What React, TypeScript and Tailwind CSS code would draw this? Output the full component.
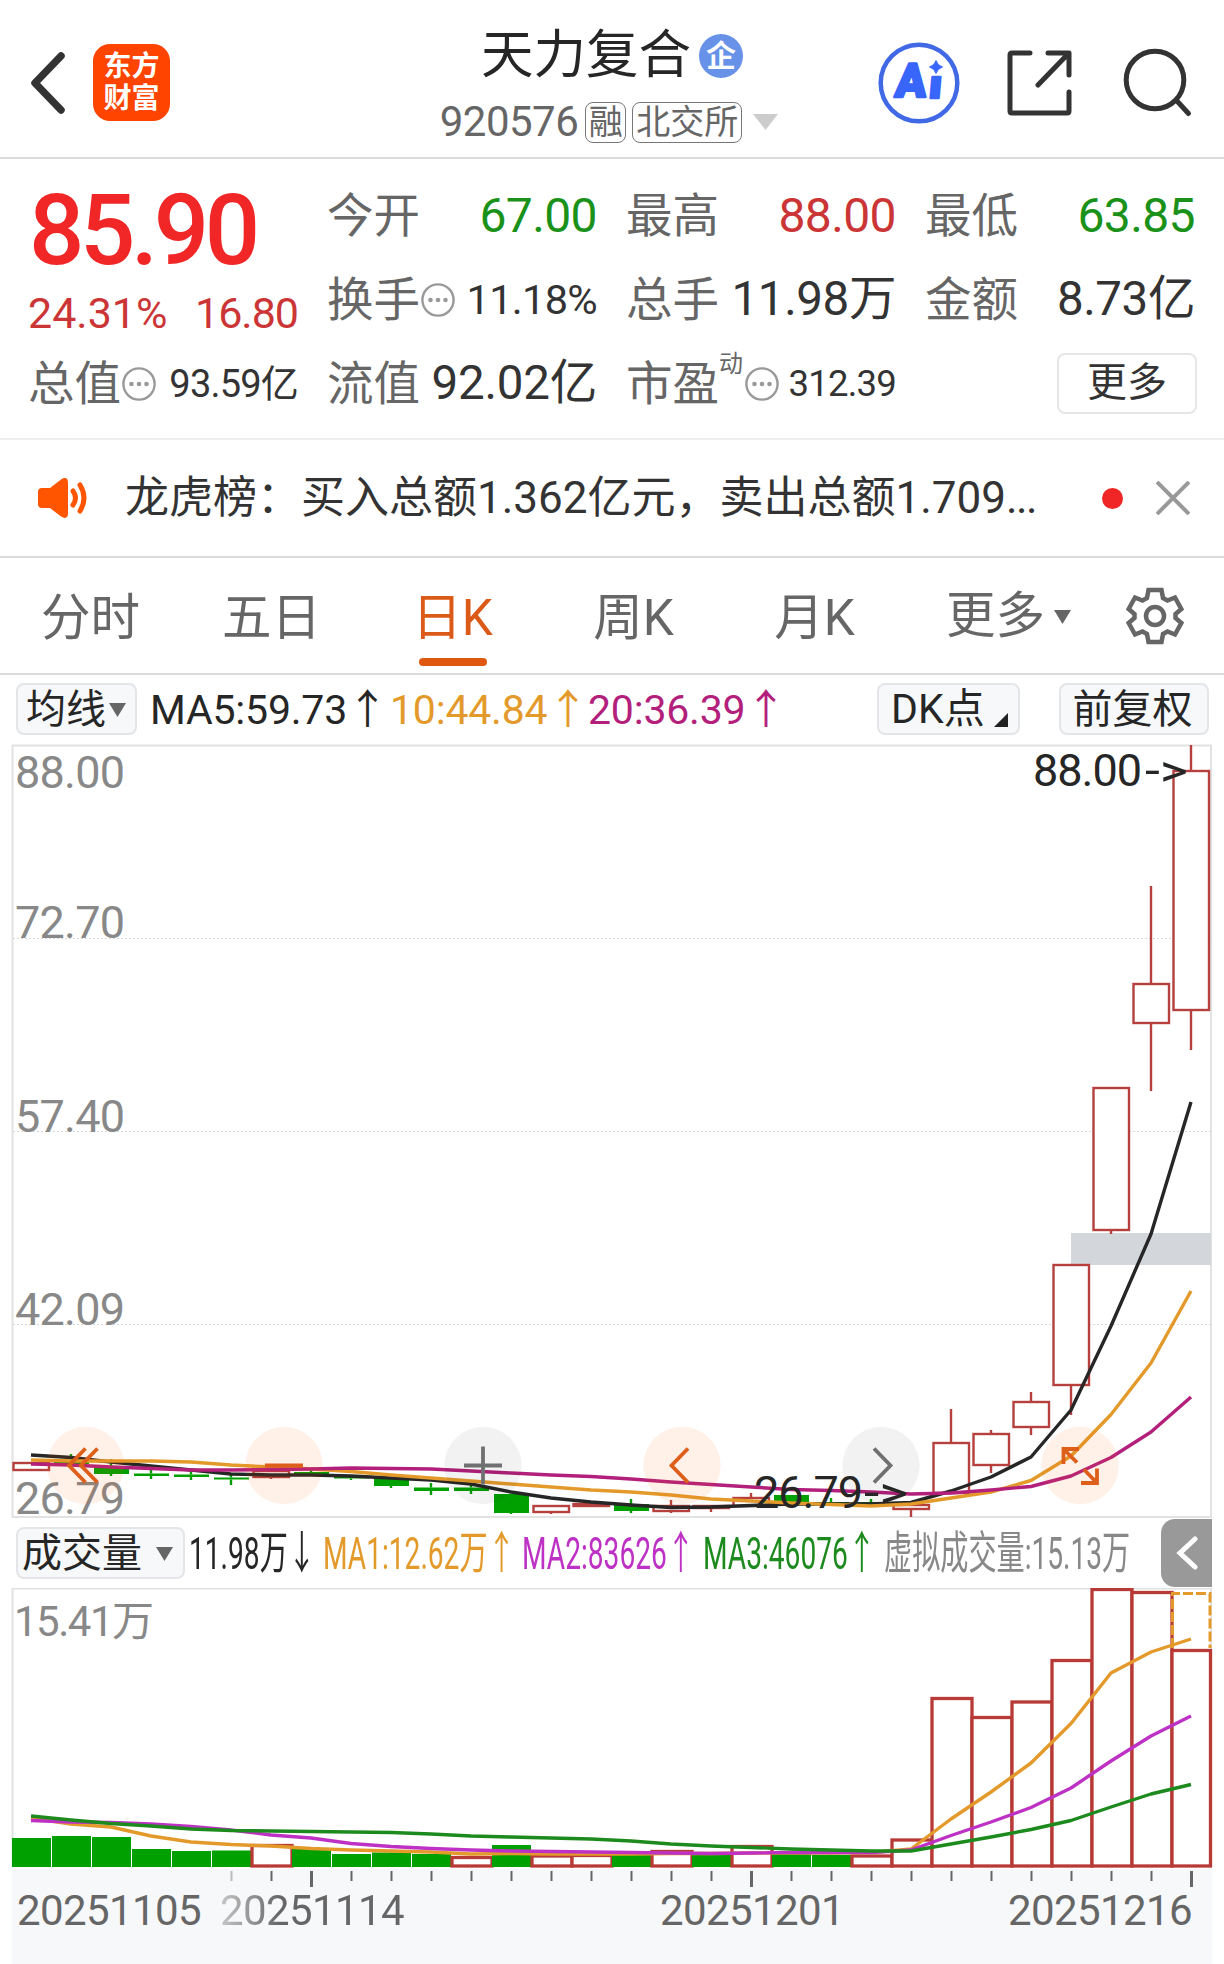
import type { ReactNode } from 'react'

// Preços e volumes em coordenadas do gráfico (um candle a cada 40px)
interface Candle {
  up: boolean
  high: number
  top: number
  bottom: number
  low: number
}

const PASSO = 40
const RED = '#b5403d'
const GREEN = '#00a000'

const x = (i: number) => 31 + i * PASSO

const k = (up: boolean, high: number, top: number, bottom: number, low: number): Candle => ({ up, high, top, bottom, low })

const CANDLES: Candle[] = [
  k(true, 1462, 1462, 1471, 1471),
  k(false, 1454, 1462, 1464, 1466),
  k(false, 1459, 1467.5, 1474, 1476),
  k(false, 1469, 1473.5, 1476, 1479),
  k(false, 1471.5, 1474.5, 1477, 1480),
  k(false, 1475, 1477.5, 1479.5, 1485),
  k(true, 1470, 1470, 1478, 1479),
  k(false, 1470, 1472, 1474.5, 1474.5),
  k(false, 1476, 1476.5, 1478.5, 1480),
  k(false, 1479, 1479, 1486, 1488),
  k(false, 1483, 1487.5, 1491, 1495),
  k(false, 1485, 1487.5, 1491, 1494),
  k(false, 1494, 1494, 1513, 1514),
  k(true, 1505, 1505, 1513, 1514),
  k(true, 1503, 1503, 1507, 1507),
  k(false, 1499, 1504, 1511, 1513),
  k(true, 1500, 1505, 1512, 1513),
  k(true, 1505, 1505, 1509, 1512),
  k(true, 1493, 1497, 1507, 1507),
  k(false, 1495, 1495, 1503, 1503),
  k(false, 1498, 1502, 1504, 1506),
  k(false, 1499, 1502, 1504, 1504),
  k(true, 1504, 1504, 1510, 1517),
  k(true, 1409, 1442, 1494, 1494),
  k(true, 1430, 1433, 1466, 1473),
  k(true, 1392, 1401, 1428, 1435),
  k(true, 1264, 1264, 1386, 1415),
  k(true, 1087, 1087, 1231, 1234),
  k(true, 886, 983, 1024, 1091),
  k(true, 745, 770, 1011, 1050),
]

const MA5 = [1455, 1457.5, 1462, 1466, 1470, 1474, 1475, 1475, 1476, 1478, 1480, 1484, 1492, 1498, 1502, 1505, 1507.5, 1507, 1505.5, 1504, 1504, 1504, 1502.5, 1491, 1477, 1457, 1410, 1326, 1234, 1102]
const MA10 = [1460, 1461, 1461, 1461, 1462, 1465, 1467, 1469, 1471.5, 1475, 1478, 1481, 1484, 1487, 1490, 1492, 1495, 1499, 1501, 1503, 1504.5, 1506, 1504, 1498, 1492, 1480.5, 1456, 1414.5, 1363, 1291]
const MA20 = [1464, 1465, 1467, 1468.5, 1470, 1470, 1469.5, 1469, 1468, 1468.5, 1469, 1471, 1473, 1475, 1476.5, 1479, 1482, 1484.5, 1487, 1489.5, 1490.5, 1492, 1494, 1493, 1490, 1486.5, 1476, 1457.5, 1432, 1397]

// Topo de cada barra de volume; a base fica em 1867
const VOLUMES: [boolean, number][] = [
  [false, 1838], [false, 1836], [false, 1837], [false, 1849], [false, 1851], [false, 1850.5],
  [true, 1844], [false, 1849], [false, 1854], [false, 1852.5], [false, 1854], [true, 1856],
  [false, 1845], [true, 1854.5], [true, 1854], [false, 1854.5], [true, 1850], [false, 1854],
  [true, 1845], [false, 1854], [false, 1855], [true, 1854.5], [true, 1838.5], [true, 1697],
  [true, 1716], [true, 1700.5], [true, 1659], [true, 1588], [true, 1591], [true, 1649],
]

const VMA1 = [1818, 1824, 1827, 1836, 1842, 1844.5, 1846, 1848.5, 1850, 1851, 1852, 1854, 1853.5, 1854, 1854, 1854, 1853.5, 1853.5, 1853, 1853, 1853, 1852.5, 1849, 1819, 1792, 1763, 1723.5, 1673, 1652, 1639]
const VMA2 = [1820.5, 1822, 1822.5, 1824, 1826.5, 1830, 1835, 1838, 1843.5, 1846.5, 1848.5, 1850, 1851, 1851.5, 1852, 1852.5, 1853, 1853.5, 1853, 1852.5, 1852.5, 1852.5, 1850, 1835.5, 1822, 1807.5, 1788, 1761, 1736, 1716]
const VMA3 = [1816, 1820, 1823.5, 1826, 1829, 1830.5, 1831, 1831.5, 1832, 1832.5, 1834, 1836, 1837, 1838, 1839, 1841, 1844, 1846, 1847.5, 1849, 1850, 1851, 1851, 1844, 1837, 1829.5, 1820.5, 1807, 1794, 1784.5]

const pontos = (ys: number[]) => ys.map((y, i) => `${x(i)},${y}`).join(' ')

const FONT = "font-[Roboto,'Noto_Sans_CJK_SC',sans-serif]"

function Linha({ ys, cor }: { ys: number[]; cor: string }) {
  return <polyline points={pontos(ys)} fill="none" stroke={cor} strokeWidth="3.4" strokeLinejoin="round" />
}

function Info() {
  return (
    <svg className="w-[34px] h-[34px] ml-px shrink-0" viewBox="0 0 34 34" fill="none" stroke="#999" strokeWidth="2.4">
      <circle cx="17" cy="17" r="15.6" />
      <g fill="#999" stroke="none">
        <circle cx="9.5" cy="17" r="2.3" />
        <circle cx="17" cy="17" r="2.3" />
        <circle cx="24.5" cy="17" r="2.3" />
      </g>
    </svg>
  )
}

function Item({ label, extra, children }: { label: string; extra?: ReactNode; children: ReactNode }) {
  return (
    <div className="flex items-center justify-between h-[84px] whitespace-nowrap">
      <span className="flex items-center -ml-px text-[46.5px] text-[#666]">{label}{extra}</span>
      {children}
    </div>
  )
}

function Seta({ className }: { className?: string }) {
  return (
    <svg className={className} width="17" height="14" viewBox="0 0 17 14" fill="#666"><path d="M0 0h17L8.5 14z" /></svg>
  )
}

function Header() {
  return (
    <header className="flex items-start h-[159px] border-b-2 border-[#dcdcdc]">
      <svg className="w-[40px] h-[64px] mt-[51px] ml-[28px]" viewBox="0 0 40 64" fill="none" stroke="#333" strokeWidth="7.5" strokeLinecap="round" strokeLinejoin="round">
        <path d="M33 5L7 32l26 27" />
      </svg>
      <div className="flex flex-col items-center justify-center w-[77px] h-[77px] mt-[44px] ml-[25px] rounded-[17px] bg-[#ff4400] text-white font-bold text-[28px] leading-[32px]">
        <span>东方</span>
        <span>财富</span>
      </div>
      <div className="flex flex-col items-center w-[350px] ml-[264px] mt-[25px] whitespace-nowrap">
        <div className="flex items-center h-[60px] ml-[6px]">
          <span className="text-[52.5px] text-[#262626]">天力复合</span>
          <span className="flex items-center justify-center w-[44px] h-[44px] ml-[8px] mt-[2px] rounded-full bg-[#6792e8] text-white font-bold text-[30px]">企</span>
        </div>
        <div className="flex items-center h-[44px] mt-[15px] text-[#666]">
          <span className="text-[42px] tracking-[-0.5px]">920576</span>
          <span className="flex items-center justify-center w-[41px] h-[41px] ml-[7px] rounded-lg border-[1.5px] border-[#777] text-[34px]">融</span>
          <span className="flex items-center justify-center w-[110px] h-[41px] ml-[6px] rounded-lg border-[1.5px] border-[#777] text-[34px]">北交所</span>
          <svg className="ml-[11px]" width="25" height="16" viewBox="0 0 25 16" fill="#ccc"><path d="M0 0h25L12.500 16z" /></svg>
        </div>
      </div>
      <svg className="w-[82px] h-[82px] mt-[42px] ml-[94px]" viewBox="0 0 82 82">
        <circle cx="41" cy="41" r="38.3" fill="none" stroke="#4169e6" strokeWidth="4.5" />
        <g fill="#3866fb" stroke="#3866fb" strokeWidth="2.500" strokeLinejoin="round" fontFamily="Roboto" fontWeight="900" transform="translate(5 0) skewX(-5)">
          <text x="16" y="55" fontSize="47" textLength="31" lengthAdjust="spacingAndGlyphs">A</text>
          <text x="50" y="56.500" fontSize="40" textLength="13" lengthAdjust="spacingAndGlyphs">ı</text>
        </g>
        <path d="M58 18.500q1.500 5 6.500 6.500q-5 1.500-6.500 6.500q-1.500-5-6.500-6.500q5-1.500 6.500-6.500z" fill="#3866fb" stroke="#3866fb" />
      </svg>
      <svg className="w-[68px] h-[68px] mt-[49px] ml-[46px]" viewBox="0 0 68 68" fill="none" stroke="#333" strokeWidth="5" strokeLinecap="round" strokeLinejoin="round">
        <path d="M24 4H6Q4 4 4 6v56q0 2 2 2h55q2 0 2-2V43M42 4h21v22M62 5L32 36" />
      </svg>
      <svg className="w-[72px] h-[72px] mt-[46px] ml-[49px]" viewBox="0 0 72 72" fill="none" stroke="#333" strokeWidth="5" strokeLinecap="round">
        <circle cx="32" cy="34" r="28.800" />
        <path d="M54 55l11.500 12.500" />
      </svg>
    </header>
  )
}

function Cotacao() {
  return (
    <section className="grid grid-cols-[269px_269px_269px_269px] gap-x-[30px] h-[281px] px-[29px] pt-[15px] border-b-2 border-[#eee]">
      <div>
        <div className="h-[116px] flex items-center text-[97.5px] font-medium text-[#f12626] tracking-[-4.4px]">85.90</div>
        <div className="flex items-center justify-between h-[46px] mb-[6px] -ml-px text-[43px] text-[#cb3535]">
          <span>24.31%</span>
          <span className="tracking-[-1px]">16.80</span>
        </div>
        <Item label="总值" extra={<Info />}>
          <span className="text-[38px] text-[#333] tracking-[-0.8px]">93.59亿</span>
        </Item>
      </div>
      <div>
        <Item label="今开"><span className="text-[48px] tracking-[-0.6px] text-[#1a921a]">67.00</span></Item>
        <Item label="换手" extra={<Info />}><span className="text-[41.500px] tracking-[-0.7px] text-[#333]">11.18%</span></Item>
        <Item label="流值"><span className="text-[47.500px] tracking-[-0.2px] text-[#333]">92.02亿</span></Item>
      </div>
      <div>
        <Item label="最高"><span className="text-[48px] tracking-[-0.6px] text-[#cb3535]">88.00</span></Item>
        <Item label="总手"><span className="text-[47.500px] tracking-[-0.4px] text-[#333]">11.98万</span></Item>
        <Item label="市盈" extra={<><span className="text-[24px] -mt-[40px] mr-px">动</span><Info /></>}>
          <span className="text-[36.500px] text-[#333] tracking-[-0.8px]">312.39</span>
        </Item>
      </div>
      <div>
        <Item label="最低"><span className="text-[48px] tracking-[-0.6px] text-[#1a921a]">63.85</span></Item>
        <Item label="金额"><span className="text-[47.500px] tracking-[-0.4px] text-[#333]">8.73亿</span></Item>
        <div className="flex items-center justify-end h-[84px] -mt-px -mr-[2px]">
          <button className="w-[140px] h-[61px] rounded-lg border-2 border-[#e6e6e6] text-[40px] text-[#333]">更多</button>
        </div>
      </div>
    </section>
  )
}

function Aviso() {
  return (
    <section className="flex items-center h-[118px] pl-[37px] border-b-2 border-[#dadada] whitespace-nowrap">
      <svg className="w-[52px] h-[42px]" viewBox="0 0 52 42" fill="#ff5500">
        <path d="M5 11h8L24 2.500q7-4 7 3.500v30q0 7.500-7 3.500L13 31H5q-4 0-4-4V15q0-4 4-4z" />
        <path d="M36 14q5 7 0 14M43 8q8 13 0 26" fill="none" stroke="#ff5500" strokeWidth="5" strokeLinecap="round" />
      </svg>
      <p className="w-[977px] ml-[36px] text-[44px] text-[#333]">
        龙虎榜：买入总额1.362亿元，卖出总额1.709<span className="tracking-[-1.600px]">...</span>
      </p>
      <span className="w-[21px] h-[21px] rounded-full bg-[#f02525]" />
      <svg className="ml-[33px]" width="34" height="34" viewBox="0 0 34 34" stroke="#999" strokeWidth="4"><path d="M1 1l32 32M33 1L1 33" /></svg>
    </section>
  )
}

const ABAS = ['分时', '五日', '日K', '周K', '月K']

function Abas() {
  return (
    <nav className="flex h-[117px] border-b-2 border-[#dcdcdc] text-[49.500px] text-[#666]">
      {ABAS.map((aba) => (
        <div key={aba} className={`flex flex-col items-center w-[181px] pt-[36px] ${aba === '日K' ? 'text-[#dc5a18]' : ''}`}>
          <span>{aba}</span>
          {aba === '日K' && <span className="w-[68px] h-[8px] mt-[14px] rounded-full bg-[#e0580f]" />}
        </div>
      ))}
      <div className="flex items-center w-[181px] pl-[41px] pt-[2px]">
        更多<Seta className="ml-[9px]" />
      </div>
      <svg className="w-[58px] h-[58px] mt-[29px] ml-[40px]" viewBox="-29 -29 58 58" fill="none" stroke="#666" strokeWidth="4.500">
        <path d="M-6.500-26h13l1.500 8 4.500 2.500L20-18.500l6.300 11.500L20.500-2v4l5.800 5L20 18.500l-7.500-3L8 18l-1.500 8h-13L-8 18l-4.500-2.500-7.500 3L-26.300 7l5.800-5v-4l-5.800-5L-20-18.500l7.500 3L-8-18z" />
        <circle r="9" />
      </svg>
    </nav>
  )
}

function Pilula({ className, children }: { className: string; children: ReactNode }) {
  return (
    <span className={`flex items-center h-[52px] rounded-lg border-2 border-[#e3e5e8] bg-[#f6f8fa] text-[40px] text-[#262626] ${className}`}>
      {children}
    </span>
  )
}

function Medias() {
  return (
    <div className="flex items-center h-[70px] pl-[16px] pr-[15px] whitespace-nowrap text-[41px]">
      <Pilula className="w-[121px] pl-[8px] pt-px">均线<Seta className="ml-[3px]" /></Pilula>
      <span className="ml-[13px] pt-[2px] w-[240px] text-[#262626] tracking-[-0.2px]">MA5:59.73↑</span>
      <span className="pt-[2px] w-[198px] text-[#e39a2b] tracking-[-0.2px]">10:44.84↑</span>
      <span className="pt-[2px] w-[289px] text-[#b3207c] tracking-[-0.2px]">20:36.39↑</span>
      <Pilula className="w-[143px] pl-[12px] pt-px">
        <span className="text-[41px]">DK点</span>
        <svg className="ml-[9px] mt-[21px]" width="14" height="14" viewBox="0 0 14 14"><path d="M14 0v14H0z" fill="#222" /></svg>
      </Pilula>
      <Pilula className="ml-auto w-[150px] pt-px pr-[3px] justify-center">前复权</Pilula>
    </div>
  )
}

const BOTOES = [
  { cx: 85.5, laranja: true, d: 'M0-17l-16.500 17L0 17M12-17L-4.500 0L12 17' },
  { cx: 284, laranja: true, d: 'M-19 0h38' },
  { cx: 483, laranja: false, d: 'M-19 0h38M0-19v38' },
  { cx: 682, laranja: true, d: 'M6-17L-10.500 0L6 17' },
  { cx: 881, laranja: false, d: 'M-7-17L9.500 0L-7 17' },
  { cx: 1080, laranja: true, d: 'M-1-16.500h-15.500v15M-16-16L-3-3M17 3v14.500h-16M16.500 17L4 4' },
]

function GraficoPreco() {
  return (
    <svg className="block overflow-visible" width="1224" height="774" viewBox="0 744 1224 774" fontFamily="Roboto">
      <path d="M12.500 1517V745.500H1211V1517z" fill="none" stroke="#e2e2e2" strokeWidth="2" />
      <path d="M13 938.500H1211M13 1131.500H1211M13 1324.500H1211" stroke="#d8d8d8" strokeDasharray="2 2" />
      <path d="M1071 1233h140v32h-140z" fill="#d3d7dc" />
      {CANDLES.map((c, i) => (
        <g key={i} stroke={c.up ? RED : GREEN} strokeWidth="2.400" fill={c.up ? '#fff' : GREEN}>
          <path d={`M${x(i)} ${c.high}V${c.top}M${x(i)} ${c.bottom}V${c.low}`} />
          {c.up
            ? <rect x={x(i) - 17.500} y={c.top + 1} width="35.500" height={c.bottom - c.top - 2} />
            : <rect x={x(i) - 17} y={c.top} width="35" height={c.bottom - c.top} stroke="none" />}
        </g>
      ))}
      <Linha ys={MA5} cor="#262626" />
      <Linha ys={MA10} cor="#e39a2b" />
      <Linha ys={MA20} cor="#b3207c" />
      <g fontSize="45" fill="#888">
        <text x="15" y="788" textLength="110">88.00</text>
        <text x="15" y="938" textLength="110">72.70</text>
        <text x="15" y="1131.500" textLength="110">57.40</text>
        <text x="15" y="1325" textLength="110">42.09</text>
        <text x="15" y="1514" textLength="110">26.79</text>
      </g>
      {BOTOES.map((b) => (
        <g key={b.cx} transform={`translate(${b.cx} 1465.500)`}>
          <circle r="38.700" fill={b.laranja ? '#ff5500' : '#000'} fillOpacity={b.laranja ? 0.09 : 0.05} />
          <path d={b.d} fill="none" stroke={b.laranja ? '#dd5f1a' : '#707070'} strokeWidth="3.800" />
        </g>
      ))}
      <g fontSize="45" fill="#262626">
        <text x="1033" y="786" textLength="109">88.00</text>
        <text x="1145" y="786" textLength="43" lengthAdjust="spacingAndGlyphs">-&gt;</text>
        <text x="754" y="1508" textLength="109">26.79</text>
        <text x="864" y="1508" textLength="44" lengthAdjust="spacingAndGlyphs">-&gt;</text>
      </g>
    </svg>
  )
}

// Textos condensados: cada bloco tem a largura final e o texto é comprimido na horizontal
const INDICADORES = [
  { texto: '11.98万↓', cor: 'text-[#262626]', largura: 'w-[134px]' },
  { texto: 'MA1:12.62万↑', cor: 'text-[#e39a2b]', largura: 'w-[199px]' },
  { texto: 'MA2:83626↑', cor: 'text-[#bd32c4]', largura: 'w-[181px]' },
  { texto: 'MA3:46076↑', cor: 'text-[#1d8a1d]', largura: 'w-[181px]' },
  { texto: '虚拟成交量:15.13万', cor: 'text-[#888]', largura: 'w-[276px]' },
]

function LinhaVolume() {
  return (
    <div className="flex items-center h-[70px] pl-[16px] pr-[12px] whitespace-nowrap">
      <Pilula className="w-[169px] pl-[4px] pt-px shrink-0">成交量<Seta className="ml-[14px]" /></Pilula>
      <div className="flex w-[976px] pl-[4px] text-[45px]">
        {INDICADORES.map((ind) => (
          <span key={ind.texto} className={`shrink-0 ${ind.largura} ${ind.cor}`}>
            <span className="inline-block origin-left scale-x-[0.625]">{ind.texto}</span>
          </span>
        ))}
      </div>
      <button className="flex items-center justify-center w-[51px] h-[68px] shrink-0 rounded-l-[14px] bg-[#999]">
        <svg width="22" height="34" viewBox="0 0 22 34" fill="none" stroke="#fff" strokeWidth="5" strokeLinecap="round"><path d="M19 3L4 17l15 14" /></svg>
      </button>
    </div>
  )
}

function GraficoVolume() {
  return (
    <svg className="block" width="1224" height="281" viewBox="0 1588 1224 281">
      <path d="M12.500 1867V1588.500H1211V1867" fill="none" stroke="#e2e2e2" strokeWidth="2" />
      {VOLUMES.map(([up, top], i) =>
        up
          ? <rect key={i} x={x(i) - 19} y={top + 1.500} width={i === 29 ? 38.500 : 40} height={1866 - top - 1.500} fill="#fff" stroke="#b83a36" strokeWidth="3.300" />
          : <rect key={i} x={x(i) - 19} y={top} width="39" height={1867 - top} fill={GREEN} />
      )}
      <path d="M1172.500 1648V1593.500H1210V1648" fill="none" stroke="#e39a2b" strokeWidth="3" strokeDasharray="10 3" />
      <Linha ys={VMA1} cor="#e39a2b" />
      <Linha ys={VMA2} cor="#bd32c4" />
      <Linha ys={VMA3} cor="#1d8a1d" />
      <text x="14" y="1636" fontSize="42" fill="#888" fontFamily="Roboto, 'Noto Sans CJK SC', sans-serif" textLength="140">15.41万</text>
    </svg>
  )
}

function Eixo() {
  return (
    <div className="ml-[12px] w-[1200px] h-[95px] bg-[#f7f8fa] text-[#666]">
      <svg className="block" width="1200" height="19" viewBox="12 1869 1200 19">
        {CANDLES.map((_, i) => {
          if (i < 5) return null
          const grande = i === 7 || i === 18 || i === 29
          return (
            <path
              key={i}
              d={`M${x(i) + 0.5} 1871V${grande ? 1887 : 1881}`}
              stroke={i === 5 ? '#bbb' : '#666'}
              strokeWidth={grande ? 3 : 2}
            />
          )
        })}
      </svg>
      <div className="flex pl-[5px] pt-[2px] text-[42px] tracking-[-0.6px]">
        <span className="w-[203px]">20251105</span>
        <span className="w-[440px]">
          <span className="bg-linear-to-r from-[#c8c8c8] to-[#666] to-[60px] bg-clip-text text-transparent">20251114</span>
        </span>
        <span className="w-[348px]">20251201</span>
        <span>20251216</span>
      </div>
    </div>
  )
}

export default function App() {
  return (
    <main className={`w-[1224px] h-[1964px] overflow-hidden bg-white leading-none ${FONT}`}>
      <Header />
      <Cotacao />
      <Aviso />
      <Abas />
      <div className="-mt-px">
        <Medias />
        <GraficoPreco />
        <LinhaVolume />
        <GraficoVolume />
        <Eixo />
      </div>
    </main>
  )
}
